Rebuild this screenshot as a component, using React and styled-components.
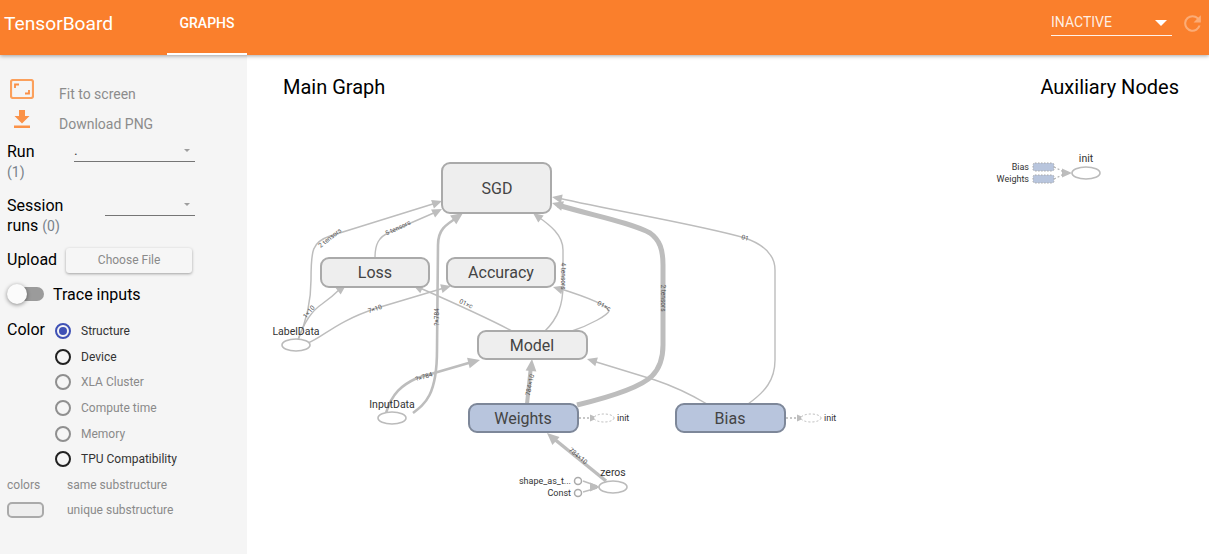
import React from "react";
import styled, { createGlobalStyle } from "styled-components";

const Global = createGlobalStyle`
  html, body { margin: 0; padding: 0; height: 100%; background: #fff; overflow: hidden; }
  body { font-family: Roboto, "Liberation Sans", sans-serif; }
`;
const Page = styled.div`width: 1209px; height: 554px; display: flex; flex-direction: column; overflow: hidden;`;
const Header = styled.header`
  height: 55px; flex: none; background: #fa7f2c; color: #fff; display: flex; align-items: stretch;
  box-shadow: 0 1px 4px rgba(0,0,0,.35); position: relative; z-index: 2;
`;
const Brand = styled.div`width: 167px; padding: 12px 0 0 4px; box-sizing: border-box; font-size: 19.2px; line-height: 23px;`;
const Tab = styled.div`
  width: 80px; box-sizing: border-box; border-bottom: 2px solid #fff; text-align: center;
  font-size: 14px; font-weight: 500; line-height: 16px; padding-top: 15px;
`;
const Spacer = styled.div`flex: 1;`;
const Inactive = styled.div`
  width: 121px; height: 21px; margin: 15px 7.5px 0 0; box-sizing: border-box; border-bottom: 1px solid rgba(255,255,255,.9);
  display: flex; justify-content: space-between; font-size: 14px; line-height: 15px; color: rgba(255,255,255,.88);
`;
const Caret = styled.i`
  width: 0; height: 0; margin: 5px 5px 0 0; border-left: 6px solid transparent; border-right: 6px solid transparent; border-top: 6px solid #fff;
`;
const Refresh = styled.svg`width: 25px; height: 25px; margin: 10.5px 4.5px 0 0; opacity: .35;`;
const Body = styled.div`flex: 1; display: flex; min-height: 0;`;
const Sidebar = styled.aside`width: 247px; flex: none; background: #f5f5f5; box-sizing: border-box; padding: 23px 0 0 7px;`;
const ActionRow = styled.div`height: 30px; display: flex; align-items: center; color: #8c8c8c; font-size: 14px;`;
const ActionIcon = styled.div`width: 52px; height: 20px; margin: 0 0 8px 0; padding-left: 3px; box-sizing: border-box; flex: none;`;
const ActionLabel = styled.span`padding-top: 1px;`;
const SelectRow = styled.div`display: flex; height: ${p => p.$h}px; margin-top: ${p => p.$mt || 0}px; justify-content: space-between; padding-right: 52px;`;
const Label = styled.div`font-size: 16px; line-height: 20px; color: #000;`;
const Count = styled.span`color: #78828a; font-size: 14px;`;
const Select = styled.div`
  width: ${p => p.$w}px; height: 20px; box-sizing: border-box; border-bottom: 1px solid #757575;
  display: flex; justify-content: space-between; font-size: 14px; color: #444; line-height: 16px;
`;
const SmallCaret = styled.i`
  width: 0; height: 0; margin: 7px 5px 0 0; border-left: 3.5px solid transparent; border-right: 3.5px solid transparent; border-top: 3.5px solid #9e9e9e;
`;
const UploadRow = styled.div`display: flex; align-items: center; height: 26px; gap: 9px;`;
const Choose = styled.div`
  width: 126px; height: 25px; background: #f6f6f6; border-radius: 3px; box-shadow: 0 1px 3px rgba(0,0,0,.35);
  color: #8a8a8a; font-size: 12px; line-height: 25px; text-align: center;
`;
const ToggleRow = styled.div`display: flex; align-items: center; height: 22px; margin-top: 10px; font-size: 16px; gap: 9px; margin-left: 1px;`;
const Track = styled.div`width: 36px; height: 14px; border-radius: 7px; background: #9b9b9b; position: relative;`;
const Knob = styled.div`
  position: absolute; left: -1px; top: -3px; width: 20px; height: 20px; border-radius: 50%; background: #fbfbfb; box-shadow: 0 1px 4px rgba(0,0,0,.45);
`;
const ColorBlock = styled.div`display: flex; margin-top: 13px; height: 154px;`;
const ColorLabel = styled(Label)`width: 48px; padding-top: 2px; flex: none;`;
const Radios = styled.div`display: flex; flex-direction: column;`;
const RadioRow = styled.div`
  height: 26px; display: flex; align-items: center; gap: 10px; font-size: 12px; color: ${p => p.$dim ? "#8a8a8a" : "#333"};
`;
const Radio = styled.i`
  width: 16px; height: 16px; border-radius: 50%; box-sizing: border-box; position: relative; flex: none;
  border: 2px solid ${p => p.$on ? "#3f51b5" : p.$dim ? "#8f8f8f" : "#212121"};
  &::after { content: ""; display: ${p => p.$on ? "block" : "none"}; position: absolute; inset: 2px; border-radius: 50%; background: #3f51b5; }
`;
const LegendRow = styled.div`display: flex; align-items: center; height: 25px; font-size: 12px; color: #8a8a8a;`;
const LegendKey = styled.div`width: 60px; flex: none;`;
const Swatch = styled.div`width: 37px; height: 16px; box-sizing: border-box; border: 2px solid #aaa; background: #eee; border-radius: 5px;`;
const Main = styled.main`flex: 1; background: #fff; display: flex; flex-direction: column; min-width: 0;`;
const Titles = styled.div`height: 64px; flex: none; box-sizing: border-box; padding: 20px 30px 0 36px; display: flex; justify-content: space-between; font-size: 20px; line-height: 24px; color: #000;`;
const Canvas = styled.svg`display: block; width: 962px; height: 435px; font-family: Roboto, "Liberation Sans", sans-serif;`;
const Edge = styled.path`fill: none; stroke: #bdbdbd; stroke-width: ${p => p.$w || 1.4}px; stroke-linejoin: round;`;
const Dotted = styled.path`fill: none; stroke: #b5b5b5; stroke-width: 1.3px; stroke-dasharray: 2 2;`;
const NodeBox = styled.rect`fill: ${p => p.$blue ? "#b8c5dd" : "#eee"}; stroke: ${p => p.$blue ? "#7d8799" : "#aaa"}; stroke-width: 2px;`;
const NodeText = styled.text`font-size: 16px; fill: #444; text-anchor: middle; dominant-baseline: central;`;
const EdgeText = styled.text`font-size: 6.5px; fill: #555; text-anchor: middle; dominant-baseline: central;`;
const OpText = styled.text`font-size: ${p => p.$s || 9}px; fill: #333; text-anchor: ${p => p.$a || "end"}; dominant-baseline: central;`;
const Oval = styled.ellipse`fill: #fff; stroke: #bbb; stroke-width: ${p => p.$w || 1.6}px;`;
const DashOval = styled.ellipse`fill: #fff; stroke: #bbb; stroke-width: 1px; stroke-dasharray: 2 2;`;
const Pin = styled.circle`fill: #fff; stroke: #aaa; stroke-width: 1.5px;`;
const DashBox = styled.rect`fill: #b8c5dd; stroke: #a9a9a9; stroke-width: 1px; stroke-dasharray: 1.5 1.5;`;

const radios = [
  ["Structure", true, false], ["Device", false, false], ["XLA Cluster", false, true],
  ["Compute time", false, true], ["Memory", false, true], ["TPU Compatibility", false, false],
];
const edges = [
  ["M298,340 C306,322 311,300 311,280 C311,250 312,242 330,236 L436,203", 1.5],
  ["M298,340 C303,325 310,312 322,304 Q332,297 340,289", 1.5],
  ["M308,343 C325,336 335,322 377,308 L444,288", 1.4],
  ["M375,258 C375,245 378,237 390,232 L436,212", 1.4],
  ["M512,331 C495,322 470,310 420,288", 1.4],
  ["M572,331 C590,325 608,315 609,311 C608,306 590,298 558,288", 1.4],
  ["M545,331 C558,318 563,305 563,285 L563,250 C563,235 550,225 537,216", 1.4],
  ["M577,405 C610,397 640,388 652,376 C660,368 663,358 663,345 L663,265 C663,250 660,240 650,233 C630,222 590,215 558,205", 5],
  ["M748,404 C765,392 775,380 775,360 L775,270 C775,255 765,245 745,238 C700,225 620,212 558,198", 1.4],
  ["M707,404 C690,394 670,385 655,380 L593,361", 1.4],
  ["M413,413 C425,404 437,395 437,350 L438,245 C438,230 445,225 458,217", 2.6],
  ["M386,413 C392,393 402,385 417,378 L472,362", 2.6],
  ["M527,404 L531,366", 4],
  ["M606,481 L553,438", 3.5],
  ["M583,481 L597,486", 1.4],
  ["M583,492 L597,488", 1.4],
];
const labels = [
  [330, 238, -38, "2 tensors"], [398, 228, -25, "5 tensors"], [309, 312, -50, "1×10"],
  [375, 309, -20, "7×10"], [466, 304, 25, "01×c"], [604, 306, 28, "01×c"],
  [563, 276, 90, "4 tensors"], [663, 298, 90, "2 tensors"], [745, 238, 14, "01"],
  [437, 317, -90, "?×784"], [424, 377, -18, "?×784"], [530, 385, -78, "784×10"],
  [578, 456, 40, "784×10"],
];
const Arrow = ({ tip, from, size = 10 }) => {
  const [x, y] = tip, [fx, fy] = from;
  const a = Math.atan2(y - fy, x - fx), s = size * .45;
  const bx = x - Math.cos(a) * size, by = y - Math.sin(a) * size;
  const px = -Math.sin(a) * s, py = Math.cos(a) * s;
  return <polygon fill="#bdbdbd" points={`${x},${y} ${bx + px},${by + py} ${bx - px},${by - py}`} />;
};
const arrows = [
  [[442, 201], [430, 205]], [[346, 285], [338, 291]], [[451, 286], [440, 289]], [[442, 209], [432, 214]],
  [[413, 285], [424, 290]], [[553, 287], [563, 290]], [[533, 213], [541, 219]], [[552, 203], [566, 207], 11],
  [[552, 197], [562, 199]], [[587, 359], [597, 362]], [[463, 213], [453, 220], 12], [[480, 360], [468, 363], 12],
  [[532, 359], [531, 371], 12], [[547, 433], [556, 441], 12], [[600, 487], [590, 487], 10],
  [[1072, 173], [1062, 173], 10], [[598, 418], [589, 418], 8], [[805, 418], [796, 418], 8],
];

export default function App() {
  return (
    <Page>
      <Global />
      <Header>
        <Brand>TensorBoard</Brand>
        <Tab>GRAPHS</Tab>
        <Spacer />
        <Inactive>INACTIVE<Caret /></Inactive>
        <Refresh viewBox="0 0 24 24" fill="#fff">
          <path d="M17.65 6.35A7.96 7.96 0 0 0 12 4a8 8 0 1 0 7.73 10h-2.08A6 6 0 1 1 12 6c1.66 0 3.14.69 4.22 1.78L13 11h7V4l-2.35 2.35z" />
        </Refresh>
      </Header>
      <Body>
        <Sidebar>
          <ActionRow>
            <ActionIcon>
              <svg width="24" height="20" viewBox="0 0 24 20" fill="none" stroke="#fba05c">
                <rect x="1" y="1" width="22" height="18" rx="2" strokeWidth="2.2" />
                <path d="M5 9V5.5h4M19 11v3.5h-4" strokeWidth="1.8" stroke="#fa8f45" />
              </svg>
            </ActionIcon>
            <ActionLabel>Fit to screen</ActionLabel>
          </ActionRow>
          <ActionRow>
            <ActionIcon>
              <svg width="24" height="20" viewBox="0 0 24 20" fill="#fb9248">
                <path d="M9 1h6v6h4.5L12 14.5 4.5 7H9zM4 16.5h16V19H4z" />
              </svg>
            </ActionIcon>
            <ActionLabel>Download PNG</ActionLabel>
          </ActionRow>
          <SelectRow $h={54} $mt={4}>
            <div><Label>Run</Label><Count>(1)</Count></div>
            <Select $w={121}>.<SmallCaret /></Select>
          </SelectRow>
          <SelectRow $h={51}>
            <div>
              <Label>Session</Label>
              <Label>runs <Count>(0)</Count></Label>
            </div>
            <Select $w={90}><span /><SmallCaret /></Select>
          </SelectRow>
          <UploadRow><Label>Upload</Label><Choose>Choose File</Choose></UploadRow>
          <ToggleRow><Track><Knob /></Track>Trace inputs</ToggleRow>
          <ColorBlock>
            <ColorLabel>Color</ColorLabel>
            <Radios>
              {radios.map(([t, on, dim]) => (
                <RadioRow key={t} $dim={dim}><Radio $on={on} $dim={dim} />{t}</RadioRow>
              ))}
            </Radios>
          </ColorBlock>
          <LegendRow><LegendKey>colors</LegendKey>same substructure</LegendRow>
          <LegendRow><LegendKey><Swatch /></LegendKey>unique substructure</LegendRow>
        </Sidebar>
        <Main>
          <Titles><span>Main Graph</span><span>Auxiliary Nodes</span></Titles>
          <Canvas viewBox="247 119 962 435">
            {edges.map(([d, w]) => <Edge key={d} d={d} $w={w} />)}
            {arrows.map(([t, f, s], i) => <Arrow key={i} tip={t} from={f} size={s} />)}
            {labels.map(([x, y, r, t]) => (
              <EdgeText key={t + x} x={x} y={y} transform={`rotate(${r} ${x} ${y})`}>{t}</EdgeText>
            ))}
            <NodeBox x="442" y="163" width="109" height="50" rx="8" />
            <NodeText x="497" y="188">SGD</NodeText>
            <NodeBox x="321" y="258" width="108" height="29" rx="8" />
            <NodeText x="375" y="272">Loss</NodeText>
            <NodeBox x="447" y="258" width="108" height="29" rx="8" />
            <NodeText x="501" y="272">Accuracy</NodeText>
            <NodeBox x="478" y="331" width="109" height="28" rx="8" />
            <NodeText x="532" y="345">Model</NodeText>
            <NodeBox $blue x="469" y="404" width="109" height="28" rx="8" />
            <NodeText x="523" y="418">Weights</NodeText>
            <NodeBox $blue x="676" y="404" width="109" height="28" rx="8" />
            <NodeText x="730" y="418">Bias</NodeText>

            <Oval cx="296" cy="345" rx="14" ry="6" />
            <OpText $s={10.5} $a="middle" x="296" y="331">LabelData</OpText>
            <Oval cx="392" cy="418" rx="14" ry="6" />
            <OpText $s={10.5} $a="middle" x="392" y="404">InputData</OpText>
            <Oval cx="613" cy="487" rx="14" ry="6" />
            <OpText $s={10.5} $a="middle" x="613" y="472">zeros</OpText>
            <Pin cx="578" cy="481" r="3.5" />
            <Pin cx="578" cy="493" r="3.5" />
            <OpText x="571" y="481">shape_as_t...</OpText>
            <OpText x="571" y="493">Const</OpText>

            <Dotted d="M579,418 L590,418" />
            <DashOval cx="604" cy="418" rx="10" ry="4" />
            <OpText $a="start" x="617" y="418">init</OpText>
            <Dotted d="M786,418 L797,418" />
            <DashOval cx="811" cy="418" rx="10" ry="4" />
            <OpText $a="start" x="824" y="418">init</OpText>

            <DashBox x="1033" y="163" width="21" height="8" rx="2" />
            <DashBox x="1033" y="175" width="21" height="8" rx="2" />
            <Dotted d="M1054,167 L1064,172 M1054,179 L1064,174" />
            <Oval cx="1086" cy="173" rx="14" ry="6" />
            <OpText $s={10.5} $a="middle" x="1086" y="158">init</OpText>
            <OpText x="1029" y="167">Bias</OpText>
            <OpText x="1029" y="179">Weights</OpText>
          </Canvas>
        </Main>
      </Body>
    </Page>
  );
}
